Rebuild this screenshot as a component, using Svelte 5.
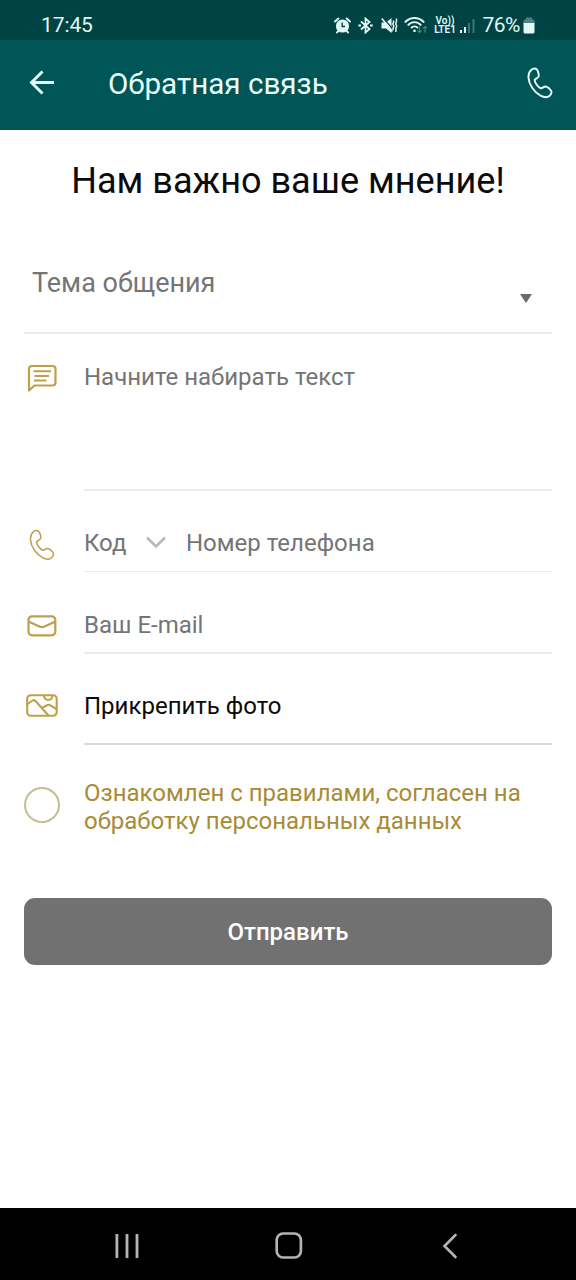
<script lang="ts">
  const handset =
    "M4.4 2.8C6.6 .9 9.5 1 10.6 3.6c.8 1.9 1.3 3.9 1.2 5.4-.1 1.7-2.9 2.4-4.1 3.8-.4 2.3 3.2 7.3 6.1 8.5 1.9.1 3.1-2.2 5-1.8 1.9.5 4.2 2.4 5.3 4.2 1.1 2-.5 4.9-2.7 6-4.2 2-11.400-1.800-16.100-8.700C.9 14.500-.1 6.500 4.400 2.800Z";

  let message = $state("");
  let code = $state("");
  let phone = $state("");
  let email = $state("");
  let agreed = $state(false);
</script>

<div class="screen">
  <div class="status">
    <span class="clock">17:45</span>
    <div class="indicators">
      <svg class="alarm" width="17" height="17" viewBox="0 0 17 17">
        <circle cx="8.500" cy="9" r="6.600" fill="currentColor" />
        <path d="M1 4.500 4.300 1.500M16 4.500 12.700 1.500M4.500 13.500 3 15.500M12.500 13.500 14 15.500" stroke="currentColor" stroke-width="2" stroke-linecap="round" />
        <path d="M8.200 5.500V9.500H11" fill="none" stroke="#004344" stroke-width="1.400" />
      </svg>
      <svg class="bt" width="15" height="17" viewBox="0 0 15 17" fill="none" stroke="currentColor" stroke-width="1.800">
        <path d="M3 4.500 11.500 12 7.500 15.500V1.500L11.500 5 3 12.500" />
        <path d="M.3 8.500H3M12 8.500H14.700" stroke-width="2" />
      </svg>
      <svg class="mute" width="17" height="17" viewBox="0 0 17 17">
        <path d="M.5 5.500H5L10.500 1V16L5 11.500H.5Z" fill="currentColor" />
        <path d="M2.300 .8 12 12.500" stroke="#004344" stroke-width="1.300" />
        <path d="M.8 1.500 11.500 14.500" stroke="currentColor" stroke-width="1.700" />
        <path d="M12.500 3.500V5.500L11.800 7 12.800 9 12 11.500V13M15.500 1.500V4.500L14.700 7 15.700 9 14.900 11.500V15" fill="none" stroke="currentColor" stroke-width="1.500" />
      </svg>
      <svg class="wifi" width="24" height="17" viewBox="0 0 24 17" fill="none" stroke="currentColor" stroke-width="1.900">
        <path d="M.8 5.500C6-.6 15-.6 20.200 5.500M3.800 8.500C7.500 4 13.500 4 17.200 8.500M7 11.200C9 8.800 12 8.800 14 11.200" />
        <circle cx="10.500" cy="13.800" r="1.400" fill="currentColor" stroke="none" />
        <path d="M15.500 9.500V15.500M13.500 13.500 15.500 15.500 17.500 13.500M21 15.500V9.500M19 11.500 21 9.500 23 11.500" stroke="#478080" stroke-width="1.200" />
      </svg>
      <div class="lte"><span>Vo))</span><span>LTE1</span></div>
      <svg class="signal" width="16" height="17" viewBox="0 0 16 17">
        <path d="M0 13H2V16H0ZM4 10H6V16H4Z" fill="currentColor" />
        <path d="M8 6H10V16H8ZM12.500 2H14.500V16H12.500Z" fill="#3f7475" />
      </svg>
      <span class="percent">76%</span>
      <svg class="battery" width="12" height="17" viewBox="0 0 12 17">
        <path d="M3 .5H9V2.500H10Q11.500 2.500 11.500 4V7H.5V4Q.5 2.500 2 2.500H3Z" fill="#56807f" />
        <path d="M.5 6H11.500V15Q11.500 16.500 10 16.500H2Q.5 16.500 .5 15Z" fill="currentColor" />
      </svg>
    </div>
  </div>

  <header class="appbar">
    <button class="icon-btn" aria-label="Назад">
      <svg width="26" height="26" viewBox="0 0 26 26" fill="none" stroke="currentColor" stroke-width="2.900">
        <path d="M13.500 1.500 2.500 12.500 13.500 23.500M2.500 12.500H25" />
      </svg>
    </button>
    <h1>Обратная связь</h1>
    <button class="icon-btn call" aria-label="Позвонить">
      <svg width="26" height="32" viewBox="0 0 26 32" fill="none" stroke="currentColor" stroke-width="1.900">
        <path d={handset} />
      </svg>
    </button>
  </header>

  <main>
    <h2>Нам важно ваше мнение!</h2>

    <button class="topic">
      <span>Тема общения</span>
      <svg width="12" height="9" viewBox="0 0 12 9"><path d="M0 0H12L6 9Z" fill="#6b6b6b" /></svg>
    </button>

    <div class="row message">
      <svg class="lead" width="30" height="29" viewBox="0 0 30 29" fill="none" stroke="currentColor" stroke-width="2.200">
        <path d="M2 26.500V5Q2 2 5 2H25.500Q28.500 2 28.500 5V18.500Q28.500 21.500 25.500 21.500H7.500Z" stroke-linejoin="round" />
        <path d="M6.500 7.300H24M7.500 12H22M7 16.500H19.500" stroke-width="2" />
      </svg>
      <div class="field"><textarea bind:value={message} placeholder="Начните набирать текст"></textarea></div>
    </div>

    <div class="row phone">
      <svg class="lead" width="26" height="32" viewBox="0 0 26 32" fill="none" stroke="currentColor" stroke-width="1.500">
        <path d={handset} />
      </svg>
      <div class="field">
        <input class="code" bind:value={code} placeholder="Код" />
        <svg class="chevron" width="20" height="13" viewBox="0 0 20 13" fill="none" stroke="#b9b9b9" stroke-width="2.600">
          <path d="M1 1.500 10 10.500 19 1.500" />
        </svg>
        <input class="number" type="tel" bind:value={phone} placeholder="Номер телефона" />
      </div>
    </div>

    <div class="row email">
      <svg class="lead" width="30" height="22" viewBox="0 0 30 22" fill="none" stroke="currentColor" stroke-width="2.200">
        <rect x="1.500" y="1.300" width="26.800" height="19" rx="3.500" />
        <path d="M2 6.800 13 11.700Q15 12.500 17 11.700L28 6.800" />
      </svg>
      <div class="field"><input bind:value={email} placeholder="Ваш E-mail" /></div>
    </div>

    <div class="row photo">
      <svg class="lead" width="32" height="23" viewBox="0 0 32 23" fill="none" stroke="currentColor" stroke-width="2.100">
        <rect x="1.200" y="1.200" width="29.500" height="20.500" rx="3.500" />
        <path d="M1.500 10 6.500 6.500Q8 5.500 9.500 7L22.500 21.500M16 14 21.500 11Q23 10.300 24.500 11.300L30.500 15M18 1.500C18.500 7.500 26 7.500 26.500 1.500" />
      </svg>
      <div class="field"><button class="attach">Прикрепить фото</button></div>
    </div>

    <label class="row agree">
      <input class="check" type="checkbox" bind:checked={agreed} />
      <span>Ознакомлен с правилами, согласен на обработку персональных данных</span>
    </label>

    <button class="submit">Отправить</button>
  </main>

  <nav class="navbar">
    <svg width="24" height="26" viewBox="0 0 24 26" stroke="currentColor" stroke-width="2.800">
      <path d="M1.900 1V25M12 1V25M22 1V25" />
    </svg>
    <svg width="28" height="28" viewBox="0 0 28 28" fill="none" stroke="currentColor" stroke-width="2.700">
      <rect x="1.700" y="1.500" width="24.200" height="24" rx="6.500" />
    </svg>
    <svg width="16" height="26" viewBox="0 0 16 26" fill="none" stroke="currentColor" stroke-width="2.600" stroke-linecap="round">
      <path d="M13.500 2 2.500 13 13.500 24" />
    </svg>
  </nav>
</div>

<style>
  :global(body) {
    background: #fff;
  }
  .screen {
    width: 576px;
    height: 1280px;
    display: flex;
    flex-direction: column;
    font-family: Roboto, "Liberation Sans", sans-serif;
    color: #0b0b0b;
    overflow: hidden;
  }
  .screen * {
    box-sizing: border-box;
  }
  svg {
    display: block;
    flex: none;
  }
  button {
    border: 0;
    padding: 0;
    background: none;
    font: inherit;
    color: inherit;
    cursor: pointer;
  }

  .status {
    height: 40px;
    flex: none;
    padding: 10px 41px 0 41px;
    display: flex;
    justify-content: space-between;
    align-items: center;
    background: #004344;
    color: #e2f7f5;
  }
  .clock,
  .percent {
    font-size: 21px;
    line-height: 30px;
  }
  .clock { letter-spacing: -0.1px; }
  .indicators {
    display: flex;
    align-items: center;
  }
  .bt { margin-left: 7px; }
  .mute { margin-left: 8px; }
  .wifi { margin-left: 6px; }
  .lte {
    width: 23px;
    margin-left: 6px;
    display: flex;
    flex-direction: column;
    align-items: center;
    font-size: 10px;
    line-height: 9px;
    font-weight: 600;
    white-space: nowrap;
  }
  .signal { margin-left: 3px; }
  .percent { margin: 0 3px 0 7px; letter-spacing: -0.5px; }

  .appbar {
    height: 90px;
    flex: none;
    padding: 0 23px 5px 29px;
    display: flex;
    align-items: center;
    background: #005557;
    color: #e8fcfb;
  }
  h1 {
    flex: 1;
    margin: 2px 0 0 53px;
    font-size: 29.6px;
    line-height: 36px;
    font-weight: 400;
  }

  main {
    flex: 1;
    padding: 0 24px;
    display: flex;
    flex-direction: column;
  }
  h2 {
    margin: 27px 0 0;
    height: 48px;
    font-size: 36.1px;
    line-height: 48px;
    font-weight: 400;
    text-align: center;
    white-space: nowrap;
  }
  .topic {
    margin-top: 35px;
    height: 94px;
    padding: 23px 20px 0 8px;
    display: flex;
    justify-content: space-between;
    align-items: flex-start;
    border-bottom: 2px solid #ebebeb;
    font-size: 27px;
    line-height: 40px;
    color: #757575;
  }
  .topic svg {
    margin-top: 31px;
  }

  .row {
    display: grid;
    grid-template-columns: 60px 1fr;
    align-items: start;
    font-size: 24px;
    line-height: 32px;
  }
  .lead {
    margin-left: 3px;
    color: #bf9f4b;
  }
  .field {
    height: 100%;
    display: flex;
    align-items: flex-start;
    border-bottom: 2px solid #ebebeb;
  }
  input,
  textarea {
    width: 100%;
    height: 32px;
    padding: 0;
    border: 0;
    outline: 0;
    resize: none;
    background: none;
    font: inherit;
    color: inherit;
  }
  textarea {
    height: 110px;
  }
  ::placeholder {
    color: #757575;
    opacity: 1;
  }
  .message {
    height: 157px;
    padding-top: 27px;
  }
  .message .lead { margin-top: 3px; }
  .phone {
    height: 81px;
    padding-top: 36px;
  }
  .phone .lead { margin: 2px 0 0 5px; }
  .phone .field { border-bottom-width: 1px; }
  .code { width: 62px; flex: none; }
  .chevron { margin: 9px 20px 0 0; }
  .email {
    height: 82px;
    padding-top: 37px;
  }
  .email .lead { margin-top: 6px; }
  .photo {
    height: 91px;
    padding-top: 36px;
  }
  .photo .lead { margin: 4px 0 0 2px; }
  .photo .field { border-color: #dadada; }
  .agree {
    margin-top: 34px;
    line-height: 28px;
    color: #a78c35;
  }
  .check {
    appearance: none;
    width: 36px;
    height: 36px;
    margin: 8px 0 0 0;
    border: 2px solid #c9bb94;
    border-radius: 50%;
  }
  .check:checked {
    background: #bf9f4b;
  }
  .submit {
    height: 67px;
    margin-top: 63px;
    border-radius: 11px;
    background: #717171;
    color: #fff;
    font-size: 24px;
    font-weight: 500;
  }

  .navbar {
    height: 72px;
    flex: none;
    padding: 4px 118px 0 115px;
    display: grid;
    grid-template-columns: 160px 1fr auto;
    align-items: center;
    background: #000;
    color: #b4b4b4;
  }
</style>
